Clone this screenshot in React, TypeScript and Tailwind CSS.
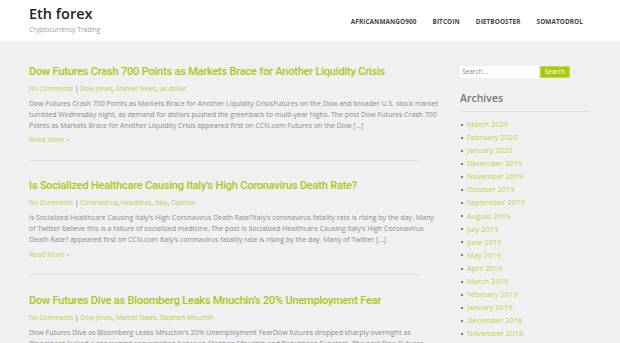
const posts = [
  {
    title: "Dow Futures Crash 700 Points as Markets Brace for Another Liquidity Crisis",
    cats: ["Dow Jones", "Market News", "us dollar"],
    excerpt: [
      "Dow Futures Crash 700 Points as Markets Brace for Another Liquidity CrisisFutures on the Dow and broader U.S. stock market",
      "tumbled Wednesday night, as demand for dollars pushed the greenback to multi-year highs. The post Dow Futures Crash 700",
      "Points as Markets Brace for Another Liquidity Crisis appeared first on CCN.com Futures on the Dow [\u2026]",
    ],
  },
  {
    title: "Is Socialized Healthcare Causing Italy\u2019s High Coronavirus Death Rate?",
    cats: ["Coronavirus", "Headlines", "Italy", "Opinion"],
    excerpt: [
      "Is Socialized Healthcare Causing Italy\u2019s High Coronavirus Death Rate?Italy\u2019s coronavirus fatality rate is rising by the day. Many",
      "of Twitter believe this is a failure of socialized medicine. The post Is Socialized Healthcare Causing Italy\u2019s High Coronavirus",
      "Death Rate? appeared first on CCN.com Italy\u2019s coronavirus fatality rate is rising by the day. Many of Twitter [\u2026]",
    ],
  },
  {
    title: "Dow Futures Dive as Bloomberg Leaks Mnuchin\u2019s 20% Unemployment Fear",
    cats: ["Dow Jones", "Market News", "Stephen Mnuchin"],
    excerpt: [
      "Dow Futures Dive as Bloomberg Leaks Mnuchin\u2019s 20% Unemployment FearDow futures dropped sharply overnight as",
      "Bloomberg leaked a concerning conversation between Stephen Mnuchin and Republican Senators. The post Dow Futures",
      "Dive as Bloomberg Leaks Mnuchin\u2019s 20% Unemployment Fear appeared first on CCN.com Dow futures [\u2026]",
    ],
  },
];

const archives = [
  "March 2020", "February 2020", "January 2020", "December 2019", "November 2019",
  "October 2019", "September 2019", "August 2019", "July 2019", "June 2019",
  "May 2019", "April 2019", "March 2019", "February 2019", "January 2019",
  "December 2018", "November 2018",
];

const nav = ["AFRICANMANGO900", "BITCOIN", "DIETBOOSTER", "SOMATODROL"];

function Post({ p, last }: { p: (typeof posts)[number]; last: boolean }) {
  return (
    <article className={`pt-[17.5px] pb-[14.5px] ${last ? "" : "border-b border-[#dedede]"}`}>
      <h2 className="text-[11px] leading-[16px] font-medium tracking-[-0.2px] text-[#a9c716] font-['Roboto',sans-serif] whitespace-nowrap">
        {p.title}
      </h2>
      <div className="mt-[4px] text-[6.6px] leading-[10px] text-[#b9d03a]">
        <span>No Comments</span>
        <span className="text-[#666]"> | </span>
        {p.cats.map((c, i) => (
          <span key={c}>
            {c}
            {i < p.cats.length - 1 ? <span className="text-[#777]">, </span> : null}
          </span>
        ))}
      </div>
      <div className="mt-[4px] text-[7px] leading-[11px] text-[#8a8a8a]">
        {p.excerpt.map((l) => (
          <div key={l} className="whitespace-nowrap">{l}</div>
        ))}
      </div>
      <div className="mt-[4.5px] text-[7px] leading-[10px] text-[#bcd34a]">Read More »</div>
    </article>
  );
}

export default function App() {
  return (
    <div className="w-[620px] h-[343px] overflow-hidden bg-[#f0f0f0] font-['Open_Sans',sans-serif]">
      <header className="h-[41px] bg-white flex items-start justify-between pl-[29px] pr-[37px]">
        <div className="pt-[4px]">
          <div className="text-[14.5px] leading-[20px] font-semibold text-[#222]">Eth forex</div>
          <div className="mt-[2px] text-[6.5px] leading-[8px] text-[#999]">Cryptocurrency Trading</div>
        </div>
        <nav className="flex gap-[16px] pt-[17px] text-[6.4px] leading-[10px] font-bold text-[#444] tracking-[0.1px]">
          {nav.map((n) => (
            <span key={n}>{n}</span>
          ))}
        </nav>
      </header>
      <div className="flex pl-[29px]">
        <main className="w-[391px] min-w-0 pt-[5px]">
          {posts.map((p, i) => (
            <Post key={p.title} p={p} last={i === posts.length - 1} />
          ))}
        </main>
        <aside className="ml-[40px] w-[130px] pt-[25px]">
          <div className="flex gap-[2px]">
            <div className="w-[78px] h-[12px] bg-white text-[6.5px] leading-[12px] px-[2px] text-[#888]">Search...</div>
            <div className="w-[30px] h-[12px] bg-[#a9c60c] border border-[#c4da5a] text-white text-[6.5px] leading-[10px] text-center">Search</div>
          </div>
          <h3 className="mt-[13px] text-[10.5px] leading-[14px] font-semibold text-[#777]">Archives</h3>
          <div className="mt-[6px] h-px bg-[#e0e0e0]" />
          <ul className="mt-[6px]">
            {archives.map((a) => (
              <li key={a} className="flex items-center h-[13.1px] text-[7.5px] text-[#bcd43c]">
                <span className="w-[2px] h-[2px] bg-[#777] ml-[1px] mr-[4px]" />
                {a}
              </li>
            ))}
          </ul>
        </aside>
      </div>
    </div>
  );
}
